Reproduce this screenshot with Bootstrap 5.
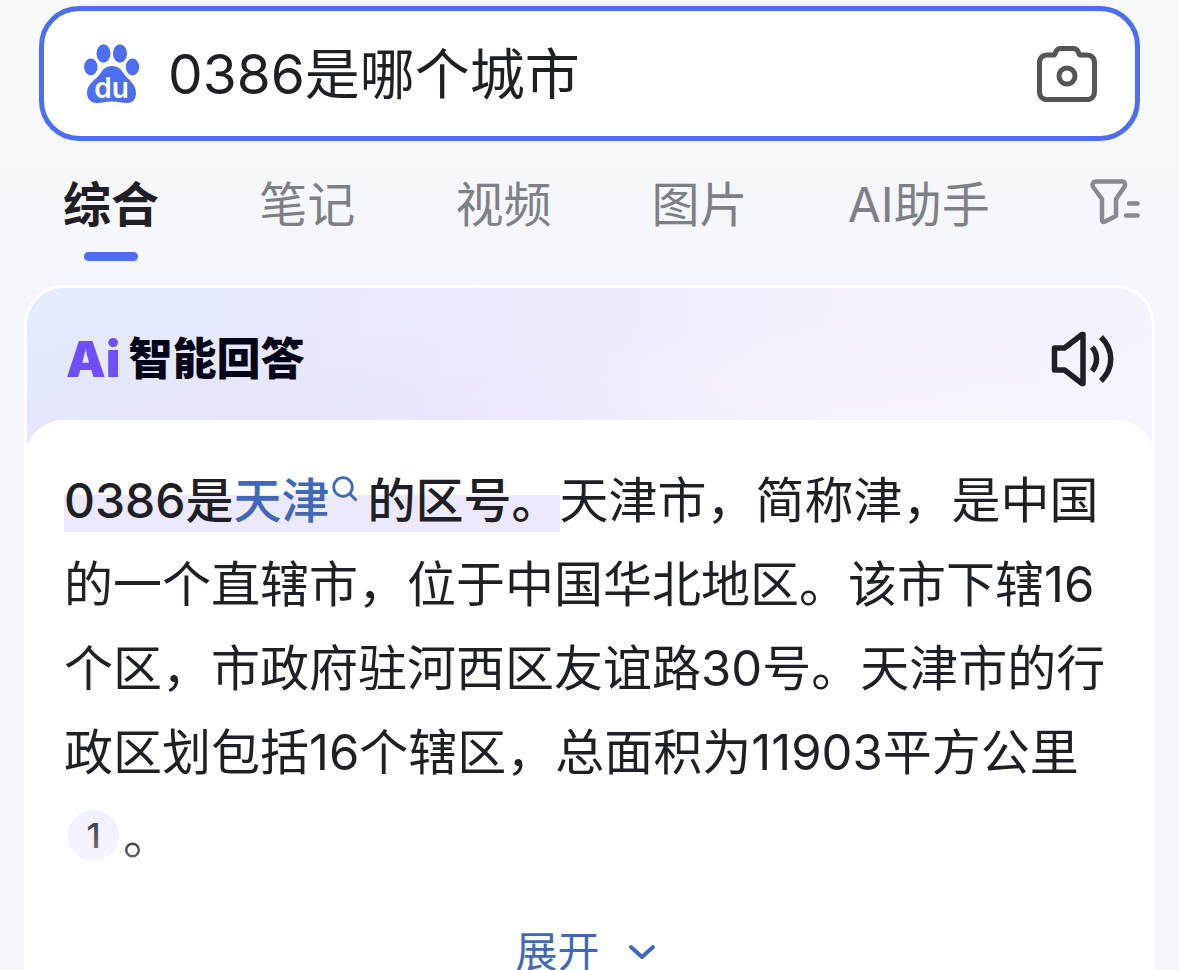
<!DOCTYPE html>
<html lang="zh-CN">
<head>
<meta charset="utf-8">
<meta name="viewport" content="width=device-width, initial-scale=1">
<title>0386是哪个城市</title>
<link href="https://cdn.jsdelivr.net/npm/bootstrap@5.3.0/dist/css/bootstrap.min.css" rel="stylesheet">
<style>
  :root { --brand: #4e6ef2; --ink: #1f2026; --muted: #7e8088; --link: #4168b8; }
  body {
    font-family: Inter, "Noto Sans CJK SC", sans-serif;
    color: var(--ink);
    background: linear-gradient(#f8f9fb, #f4f6fb 280px) no-repeat #f4f6fb;
    min-height: 100vh;
    overflow-x: hidden;
  }
  button { color: inherit; }
  svg { display: block; flex: none; }
  .search-box {
    margin: 6px 39px 0;
    height: 135px;
    padding: 0 38px 0 40px;
    border: 5px solid var(--brand);
    border-radius: 40px;
  }
  .search-box input {
    font-size: 55px;
    line-height: 80px;
    color: var(--ink);
    margin-left: 28px;
    outline: 0;
    min-width: 0;
  }
  .tabs { margin: 0 39px 0 63px; height: 144px; padding-top: 28px; }
  .tabs a { font-size: 48px; line-height: 72px; color: var(--muted); }
  .tabs a.active { font-weight: 700; color: var(--ink); }
  .tabs a.active::after {
    content: ""; display: block; width: 54px; height: 9px; margin: 11px auto 0;
    border-radius: 5px; background: var(--brand);
  }
  .tabs button { margin-top: 8px; color: #888995; }
  .answer {
    margin: 0 24px;
    border-radius: 40px 40px 0 0;
    border-top: 3px solid #fff;
    background: #fff;
  }
  .answer-wrap {
    border-radius: 38px 38px 0 0;
    border: solid #fff; border-width: 0 3px;
    background:
      radial-gradient(ellipse 60% 90% at 15% 110%, rgba(230,226,252,.9), rgba(232,228,253,0)),
      radial-gradient(ellipse 50% 80% at 80% 100%, rgba(247,245,254,.9), rgba(247,245,254,0)),
      linear-gradient(100deg, #e2ebfc 0%, #e7e8fc 25%, #eee8fc 42%, #f3effd 65%, #f5f3fe 100%);
    height: 172px;
  }
  .answer-head { height: 132px; padding: 10px 37px 0 39px; }
  .answer-head h1 { font-size: 44px; line-height: 64px; font-weight: 900; color: #05051a; gap: 8px; }
  .answer-head h1 .ai { color: #704dff; font-size: 50px; }
  .answer-body {
    margin-top: -40px;
    padding: 39px 40px 0;
    border-radius: 40px 40px 0 0;
    background: #fff;
  }
  .answer-text { font-size: 49px; line-height: 84px; }
  .key {
    font-size: 48px;
    font-weight: 500;
    padding-bottom: 2px;
    background: linear-gradient(transparent 40%, #ece8fd 40%);
  }
  .key a { color: var(--link); }
  .key svg { display: inline-block; vertical-align: 16px; margin: 0 10px 0 2px; }
  .cite {
    display: inline-block; width: 51px; height: 51px; margin: 0 4px;
    border-radius: 50%; background: #f1f0fd; color: #40414a;
    font-size: 34px; line-height: 51px; font-weight: 500; vertical-align: 6px;
  }
  .more { position: relative; margin-top: 55px; color: var(--link); font-size: 42px; line-height: 36px; }
  .more::before {
    content: ""; position: absolute; left: 0; right: 0; bottom: 100%; height: 110px;
    background: linear-gradient(rgba(255,255,255,0), #fff); pointer-events: none;
  }
  .more button { gap: 28px; font: inherit; color: inherit; }
</style>
</head>
<body class="d-flex flex-column">
  <form class="search-box d-flex align-items-center bg-white flex-shrink-0" role="search">
    <svg width="56" height="60" viewBox="0 0 56 60" fill="#4e6ef2" aria-hidden="true">
      <ellipse cx="19.500" cy="9.500" rx="7" ry="9.300"/>
      <ellipse cx="36" cy="9.500" rx="7" ry="9.300"/>
      <ellipse cx="6.800" cy="23" rx="6.700" ry="8.500"/>
      <ellipse cx="48.500" cy="23" rx="6.700" ry="8.500"/>
      <path d="M28 22c-6 0-9 3-12 8-3 5-13 9-13 19 0 6 4 10 10 10 5 0 9-1.500 15-1.500S38 59 43 59c6 0 9-4 9-10 0-10-9-14-12-19-3-5-6-8-12-8z"/>
      <text x="27.500" y="54" text-anchor="middle" font-family="Inter, sans-serif" font-weight="600" font-size="28" fill="#fff">du</text>
    </svg>
    <input class="form-control-plaintext flex-grow-1 p-0" type="text" value="0386是哪个城市" aria-label="搜索">
    <button class="btn p-0 border-0" type="button" aria-label="拍照搜索">
      <svg width="60" height="56" viewBox="0 0 60 56" fill="none" stroke="#555" stroke-width="5" stroke-linejoin="round">
        <path d="M10.500 9H17c1 0 1-1 1.500-2.500C19.500 3.500 21 2.500 24 2.500h12c3 0 4.500 1 5.500 4C42 8 42 9 43 9h6.500c5 0 8 3 8 8v28.500c0 5-3 8-8 8h-39c-5 0-8-3-8-8V17c0-5 3-8 8-8z"/>
        <circle cx="30" cy="30" r="8"/>
      </svg>
    </button>
  </form>

  <nav class="tabs d-flex justify-content-between align-items-start flex-shrink-0" aria-label="搜索类型">
    <a class="active text-decoration-none" aria-current="page" href="#">综合</a>
    <a class="text-decoration-none" href="#">笔记</a>
    <a class="text-decoration-none" href="#">视频</a>
    <a class="text-decoration-none" href="#">图片</a>
    <a class="text-decoration-none" href="#">AI助手</a>
    <button class="btn p-0 border-0 lh-1" type="button" aria-label="筛选">
      <svg width="50" height="48" viewBox="0 0 50 48" fill="none" stroke="#888995" stroke-width="4.500" stroke-linecap="round" stroke-linejoin="round">
        <path d="M6 4.500h26c3 0 4 3 2 6L26 22v17l-11 5.500c-2 1-3 0-3-2V22L3.500 10.500C1.500 7.500 3 4.500 6 4.500z"/>
        <path d="M39 26.500h8.500M36 38.500h11.500"/>
      </svg>
    </button>
  </nav>

  <main class="answer flex-grow-1">
    <div class="answer-wrap">
      <header class="answer-head d-flex justify-content-between align-items-center">
        <h1 class="d-flex align-items-center m-0"><span class="ai">Ai</span><span>智能回答</span></h1>
        <button class="btn p-0 border-0" type="button" aria-label="朗读">
          <svg width="64" height="56" viewBox="0 0 64 56" fill="none" stroke="#1f2026" stroke-width="5.500" stroke-linejoin="round">
            <path d="M3.500 17h10L31 3.500h1v49h-1L13.500 39h-10z"/>
            <path d="M41 16c6 7 6 17 0 24M50 6c13 13 13 31 0 44"/>
          </svg>
        </button>
      </header>
    </div>
    <div class="answer-body position-relative">
      <p class="answer-text m-0"><span class="key">0386是<a class="text-decoration-none" href="#">天津<svg width="26" height="26" viewBox="0 0 26 26" fill="none" stroke="#4168b8" stroke-width="2.800" aria-hidden="true"><circle cx="11" cy="11" r="9.300"/><path d="M17.500 17.500l7 7"/></svg></a>的区号。</span>天津市，简称津，是中国的一个直辖市，位于中国华北地区。该市下辖16个区，市政府驻河西区友谊路30号。天津市的行政区划包括16个辖区，总面积为11903平方公里<a class="cite text-center text-decoration-none" href="#">1</a>。</p>
      <div class="more d-flex justify-content-center">
        <button class="btn p-0 pe-2 border-0 d-flex align-items-center position-relative z-1" type="button">
          <span>展开</span>
          <svg width="28" height="16" viewBox="0 0 28 16" fill="none" stroke="#4168b8" stroke-width="4" stroke-linecap="round" stroke-linejoin="round"><path d="M3 3l11 10L25 3"/></svg>
        </button>
      </div>
    </div>
  </main>
<script src="https://cdn.jsdelivr.net/npm/bootstrap@5.3.0/dist/js/bootstrap.bundle.min.js"></script>
</body>
</html>
